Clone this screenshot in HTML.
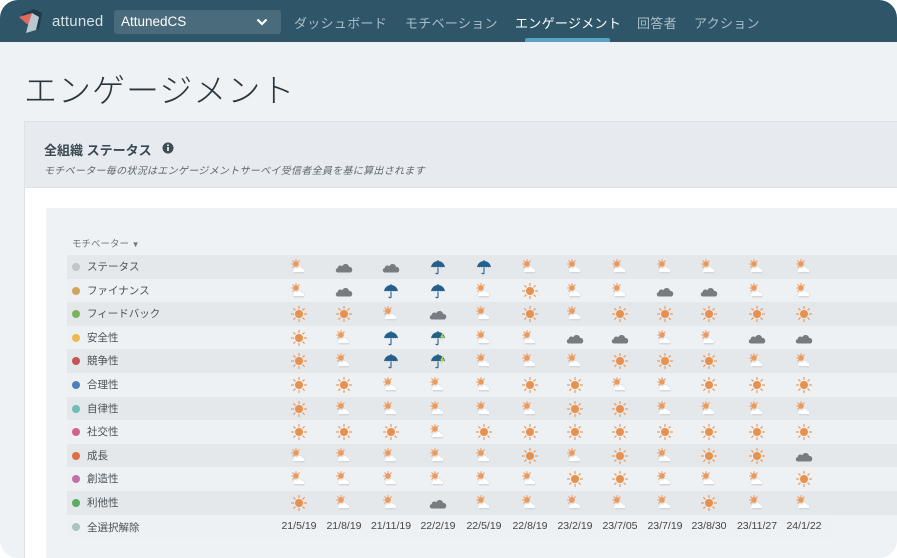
<!DOCTYPE html>
<html><head><meta charset="utf-8"><style>
*{margin:0;padding:0;box-sizing:border-box}
body{width:897px;height:558px;background:#fff;font-family:"Liberation Sans","Noto Sans CJK JP",sans-serif;overflow:hidden}
#f{position:absolute;left:0;top:0;width:897px;height:558px;border-radius:18px;overflow:hidden;background:#eef2f5}
#nav{position:absolute;left:0;top:0;width:897px;height:42px;background:#2f5668}
.nv{position:absolute;top:13px;font-size:13px;color:#a9bcc6;letter-spacing:.3px}
#dd{position:absolute;left:114px;top:10px;width:167px;height:24px;background:#4a6b7c;border-radius:3px}
#card{position:absolute;left:24px;top:121px;width:890px;height:460px;background:#fff;border:1px solid #dde2e6}
#ch{position:absolute;left:0;top:0;right:0;height:66px;background:#e7ebef;border-bottom:1px solid #dde2e6}
#pan{position:absolute;left:46px;top:208px;width:860px;height:360px;background:#eff2f5}
.row{position:absolute;left:67px;width:840px;height:23.6px}
.row.d{background:#e5e8eb}.row.l{background:#eef1f4}
.lb{position:absolute;left:20px;top:4px;font-size:10.5px;color:#4a5358}
.dot{position:absolute;left:5px;top:8px;width:8px;height:8px;border-radius:50%}
.row svg{position:absolute;top:3px;width:18px;height:18px}
.row svg:nth-of-type(1){left:223px}.row svg:nth-of-type(2){left:268px}.row svg:nth-of-type(3){left:315px}.row svg:nth-of-type(4){left:362px}.row svg:nth-of-type(5){left:408px}.row svg:nth-of-type(6){left:454px}.row svg:nth-of-type(7){left:499px}.row svg:nth-of-type(8){left:544px}.row svg:nth-of-type(9){left:589px}.row svg:nth-of-type(10){left:633px}.row svg:nth-of-type(11){left:681px}.row svg:nth-of-type(12){left:728px}
.dt{position:absolute;top:5px;font-size:10.5px;color:#444;width:60px;text-align:center}
</style></head><body>
<svg width="0" height="0" style="position:absolute">
<defs>
<symbol id="S" viewBox="0 0 18 18"><g stroke="#e99a5c" stroke-width="1.2" stroke-linecap="round"><path d="M9 1.5v2M9 14.5v2M1.5 9h2M14.5 9h2M3.7 3.7l1.4 1.4M12.9 12.9l1.4 1.4M3.7 14.3l1.4-1.4M12.9 5.1l1.4-1.4"/></g><circle cx="9" cy="9" r="4" fill="#e8904e"/></symbol>
<symbol id="P" viewBox="0 0 18 18"><g stroke="#eba06a" stroke-width="1.1" stroke-linecap="round"><path d="M6 1.5v1.7M1.5 6h1.7M2.8 2.8l1.2 1.2M9.2 2.8L8 4M2.8 9.2L4 8"/></g><circle cx="6" cy="6" r="2.8" fill="#eb9a5e"/><path d="M4 14.5c-1.5 0-2.2-2.2-.6-2.9.2-2 2.6-2.4 3.6-1.2.8-2.3 4.3-2.4 5.1.1 2.4-.2 3 2.6 1.9 4z" fill="#fff" stroke="#d9dde2" stroke-width=".6"/><path d="M4 14.8h10" stroke="#c9d2da" stroke-width="1.2"/></symbol>
<symbol id="C" viewBox="0 0 18 18"><path d="M3 14.5c-2.8 0-3-4.2-.3-4.4.2-2.7 3.2-3.4 4.5-1.7 1-3.2 6.1-3.3 6.9.5 3.4-.3 4.3 4.4 1.5 5.6z" fill="#787c80"/></symbol>
<symbol id="U" viewBox="0 0 18 18"><path d="M2 9.5C2.5 5 6 3 9 3s6.5 2 7 6.5c-.8-.9-1.7-.9-2.4 0-.6-.9-1.6-.9-2.3 0C10.6 8.6 9.6 8.6 9 9.5 8.4 8.6 7.4 8.6 6.7 9.5 6.1 8.6 5.1 8.6 4.4 9.5 3.7 8.6 2.8 8.6 2 9.5z" fill="#26608a"/><path d="M9 3V2M9 9.5v5.2c0 1.4-2 1.4-2 0" stroke="#26608a" stroke-width="1.1" fill="none"/></symbol>
<symbol id="L" viewBox="0 0 18 18"><use href="#U"/><path d="M13.5 4l-2.3 4.5h2l-1.2 4.5 3.3-5.6h-2l1.5-3.4z" fill="#cbe05a"/></symbol>
</defs></svg>
<div id="f">
<div id="nav">
<svg style="position:absolute;left:17px;top:8px" width="34" height="28" viewBox="0 0 34 28"><path d="M5 6l12-5 8 4-3 16-9 3z" fill="#1f3a48"/><path d="M2 9l13-4-4 12z" fill="#e06a5e"/><path d="M15 5l7 4-3 13-10 3 2-8z" fill="#b9c7d0"/></svg>
<div style="position:absolute;left:52px;top:13px;font-size:15px;color:#d6e0e6;letter-spacing:.2px">attuned</div>
<div id="dd"><span style="position:absolute;left:7px;top:4px;font-size:13.5px;color:#fff">AttunedCS</span>
<svg style="position:absolute;left:142px;top:7px" width="12" height="10" viewBox="0 0 12 10"><path d="M1.5 2.5l4.5 4.5 4.5-4.5" stroke="#fff" stroke-width="2.2" fill="none"/></svg></div>
<div class="nv" style="left:294px">ダッシュボード</div>
<div class="nv" style="left:405px">モチベーション</div>
<div class="nv" style="left:515px;color:#fff">エンゲージメント</div>
<div class="nv" style="left:637px">回答者</div>
<div class="nv" style="left:694px">アクション</div>
<div style="position:absolute;left:525px;top:38px;width:85px;height:4px;background:#5a9fc4;border-radius:2px 2px 0 0"></div>
</div>
<div style="position:absolute;left:24px;top:67px;font-size:33px;color:#2a363c;letter-spacing:1px;line-height:48px;font-weight:300">エンゲージメント</div>
<div id="card"><div id="ch">
<div style="position:absolute;left:19px;top:18px;font-size:13px;font-weight:bold;color:#3b4a52">全組織 ステータス</div>
<svg style="position:absolute;left:137px;top:20px" width="12" height="12" viewBox="0 0 12 12"><circle cx="6" cy="6" r="5.5" fill="#3e4d55"/><rect x="5.2" y="5" width="1.6" height="4" fill="#fff"/><circle cx="6" cy="3.3" r=".9" fill="#fff"/></svg>
<div style="position:absolute;left:19px;top:40px;font-size:10px;font-style:italic;color:#5f686d;letter-spacing:.3px">モチベーター毎の状況はエンゲージメントサーベイ受信者全員を基に算出されます</div>
</div></div>
<div id="pan"></div>
<div style="position:absolute;left:72px;top:236px;font-size:9.5px;color:#6f777c">モチベーター <span style="font-size:8px">▼</span></div>

<div class="row d" style="top:255px"><span class="dot" style="background:#c3c6c9"></span><span class="lb">ステータス</span>
<svg><use href="#P"/></svg><svg><use href="#C"/></svg><svg><use href="#C"/></svg><svg><use href="#U"/></svg><svg><use href="#U"/></svg><svg><use href="#P"/></svg><svg><use href="#P"/></svg><svg><use href="#P"/></svg><svg><use href="#P"/></svg><svg><use href="#P"/></svg><svg><use href="#P"/></svg><svg><use href="#P"/></svg></div>
<div class="row l" style="top:278.6px"><span class="dot" style="background:#d3a45e"></span><span class="lb">ファイナンス</span>
<svg><use href="#P"/></svg><svg><use href="#C"/></svg><svg><use href="#U"/></svg><svg><use href="#U"/></svg><svg><use href="#P"/></svg><svg><use href="#S"/></svg><svg><use href="#P"/></svg><svg><use href="#P"/></svg><svg><use href="#C"/></svg><svg><use href="#C"/></svg><svg><use href="#P"/></svg><svg><use href="#P"/></svg></div>
<div class="row d" style="top:302.2px"><span class="dot" style="background:#7cb45e"></span><span class="lb">フィードバック</span>
<svg><use href="#S"/></svg><svg><use href="#S"/></svg><svg><use href="#P"/></svg><svg><use href="#C"/></svg><svg><use href="#P"/></svg><svg><use href="#S"/></svg><svg><use href="#P"/></svg><svg><use href="#S"/></svg><svg><use href="#S"/></svg><svg><use href="#S"/></svg><svg><use href="#S"/></svg><svg><use href="#S"/></svg></div>
<div class="row l" style="top:325.8px"><span class="dot" style="background:#efb94f"></span><span class="lb">安全性</span>
<svg><use href="#S"/></svg><svg><use href="#P"/></svg><svg><use href="#U"/></svg><svg><use href="#L"/></svg><svg><use href="#P"/></svg><svg><use href="#P"/></svg><svg><use href="#C"/></svg><svg><use href="#C"/></svg><svg><use href="#P"/></svg><svg><use href="#P"/></svg><svg><use href="#C"/></svg><svg><use href="#C"/></svg></div>
<div class="row d" style="top:349.4px"><span class="dot" style="background:#c65457"></span><span class="lb">競争性</span>
<svg><use href="#S"/></svg><svg><use href="#P"/></svg><svg><use href="#U"/></svg><svg><use href="#L"/></svg><svg><use href="#P"/></svg><svg><use href="#P"/></svg><svg><use href="#P"/></svg><svg><use href="#S"/></svg><svg><use href="#S"/></svg><svg><use href="#S"/></svg><svg><use href="#P"/></svg><svg><use href="#P"/></svg></div>
<div class="row l" style="top:373px"><span class="dot" style="background:#4c80bd"></span><span class="lb">合理性</span>
<svg><use href="#S"/></svg><svg><use href="#S"/></svg><svg><use href="#P"/></svg><svg><use href="#P"/></svg><svg><use href="#P"/></svg><svg><use href="#S"/></svg><svg><use href="#S"/></svg><svg><use href="#P"/></svg><svg><use href="#P"/></svg><svg><use href="#S"/></svg><svg><use href="#S"/></svg><svg><use href="#S"/></svg></div>
<div class="row d" style="top:396.6px"><span class="dot" style="background:#6dbdb8"></span><span class="lb">自律性</span>
<svg><use href="#S"/></svg><svg><use href="#P"/></svg><svg><use href="#P"/></svg><svg><use href="#P"/></svg><svg><use href="#P"/></svg><svg><use href="#P"/></svg><svg><use href="#S"/></svg><svg><use href="#S"/></svg><svg><use href="#P"/></svg><svg><use href="#P"/></svg><svg><use href="#P"/></svg><svg><use href="#P"/></svg></div>
<div class="row l" style="top:420.2px"><span class="dot" style="background:#d0628b"></span><span class="lb">社交性</span>
<svg><use href="#S"/></svg><svg><use href="#S"/></svg><svg><use href="#S"/></svg><svg><use href="#P"/></svg><svg><use href="#S"/></svg><svg><use href="#S"/></svg><svg><use href="#S"/></svg><svg><use href="#S"/></svg><svg><use href="#S"/></svg><svg><use href="#S"/></svg><svg><use href="#S"/></svg><svg><use href="#S"/></svg></div>
<div class="row d" style="top:443.8px"><span class="dot" style="background:#e06e45"></span><span class="lb">成長</span>
<svg><use href="#P"/></svg><svg><use href="#P"/></svg><svg><use href="#P"/></svg><svg><use href="#P"/></svg><svg><use href="#P"/></svg><svg><use href="#S"/></svg><svg><use href="#P"/></svg><svg><use href="#S"/></svg><svg><use href="#P"/></svg><svg><use href="#S"/></svg><svg><use href="#S"/></svg><svg><use href="#C"/></svg></div>
<div class="row l" style="top:467.4px"><span class="dot" style="background:#c070a6"></span><span class="lb">創造性</span>
<svg><use href="#P"/></svg><svg><use href="#P"/></svg><svg><use href="#P"/></svg><svg><use href="#P"/></svg><svg><use href="#P"/></svg><svg><use href="#P"/></svg><svg><use href="#S"/></svg><svg><use href="#S"/></svg><svg><use href="#P"/></svg><svg><use href="#P"/></svg><svg><use href="#P"/></svg><svg><use href="#S"/></svg></div>
<div class="row d" style="top:491px"><span class="dot" style="background:#5dab62"></span><span class="lb">利他性</span>
<svg><use href="#S"/></svg><svg><use href="#P"/></svg><svg><use href="#P"/></svg><svg><use href="#C"/></svg><svg><use href="#P"/></svg><svg><use href="#P"/></svg><svg><use href="#P"/></svg><svg><use href="#P"/></svg><svg><use href="#P"/></svg><svg><use href="#S"/></svg><svg><use href="#P"/></svg><svg><use href="#P"/></svg></div>
<div class="row l" style="top:514.6px;height:25px;width:765px"><span class="dot" style="background:#a9c2c2"></span><span class="lb" style="top:5px">全選択解除</span>
<span class="dt" style="left:202px">21/5/19</span><span class="dt" style="left:247px">21/8/19</span><span class="dt" style="left:294px">21/11/19</span><span class="dt" style="left:341px">22/2/19</span><span class="dt" style="left:387px">22/5/19</span><span class="dt" style="left:433px">22/8/19</span><span class="dt" style="left:478px">23/2/19</span><span class="dt" style="left:523px">23/7/05</span><span class="dt" style="left:568px">23/7/19</span><span class="dt" style="left:612px">23/8/30</span><span class="dt" style="left:660px">23/11/27</span><span class="dt" style="left:707px">24/1/22</span></div>
</div>
</body></html>
